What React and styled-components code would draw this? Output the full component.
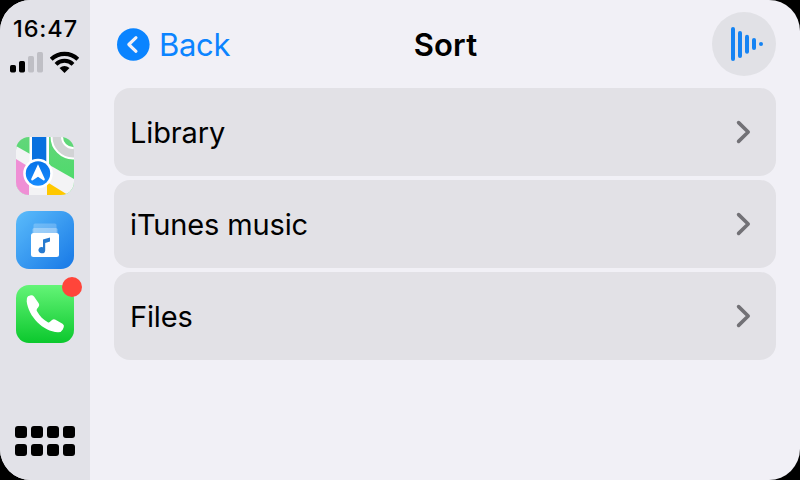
import React from "react";
import styled, { createGlobalStyle } from "styled-components";

const GlobalStyle = createGlobalStyle`
  * { box-sizing: border-box; }
  body { margin: 0; background: #000; font-family: Inter, "Liberation Sans", sans-serif; color: #000; }
  svg { display: block; }
`;

const Screen = styled.div`
  display: flex;
  width: 800px;
  height: 480px;
  border-radius: 31px;
  overflow: hidden;
  background: #f1f0f6;
`;

const Sidebar = styled.aside`
  display: flex;
  flex-direction: column;
  align-items: center;
  width: 90px;
  height: 100%;
  padding: 16px 0 24px;
  background: #e2e2e8;
`;

const Clock = styled.time`
  font-size: 23.5px;
  line-height: 26px;
  font-weight: 500;
  letter-spacing: 0.9px;
  padding-left: 1px;
`;

const Status = styled.div`
  display: flex;
  align-items: flex-end;
  gap: 7px;
  height: 22px;
  margin-top: 9px;
`;

const Apps = styled.nav`
  display: flex;
  flex-direction: column;
  gap: 16px;
  margin-top: 64px;
`;

const AppTile = styled.div`
  position: relative;
  width: 58px;
  height: 58px;
`;

const Badge = styled.span`
  position: absolute;
  top: -8px;
  right: -8px;
  width: 20px;
  height: 20px;
  border-radius: 50%;
  background: #ff453a;
`;

const AppGrid = styled.div`
  display: grid;
  grid-template-columns: repeat(4, 12px);
  gap: 6px 4px;
  margin-top: auto;
`;

const GridDot = styled.i`
  height: 12px;
  border-radius: 3px;
  background: #000;
`;

const Main = styled.main`
  flex: 1;
  padding: 12px 24px 0;
`;

const Header = styled.header`
  display: grid;
  grid-template-columns: 1fr auto 1fr;
  align-items: center;
  height: 64px;
  margin-bottom: 12px;
`;

const Back = styled.div`
  display: flex;
  align-items: center;
  gap: 9px;
  padding-left: 3px;
  color: #0b84ff;
  font-size: 31px;
  line-height: 38px;
  letter-spacing: -0.3px;
`;

const BackLabel = styled.span`
  padding-top: 2px;
`;

const Title = styled.h1`
  margin: 0;
  padding: 2px 0 0 1px;
  font-size: 31px;
  line-height: 38px;
  font-weight: 600;
  letter-spacing: 0.2px;
`;

const NowPlaying = styled.div`
  display: grid;
  place-items: center;
  justify-self: end;
  width: 64px;
  height: 64px;
  border-radius: 50%;
  background: #e1e1e6;
`;

const List = styled.div`
  display: flex;
  flex-direction: column;
  gap: 4px;
`;

const Row = styled.div`
  display: flex;
  align-items: center;
  justify-content: space-between;
  height: 88px;
  padding: 0 24px 0 16px;
  border-radius: 16px;
  background: #e2e1e6;
`;

const RowLabel = styled.span`
  padding-top: 2px;
  font-size: 29px;
  line-height: 38px;
  letter-spacing: -0.14px;
`;

const rows = ["Library", "iTunes music", "Files"];

const SignalIcon = () => (
  <svg width="33" height="22" viewBox="0 0 33 22">
    <rect x="0" y="14" width="6" height="7.5" rx="1.7" />
    <rect x="9" y="10" width="6" height="11.5" rx="1.7" />
    <rect x="18" y="5" width="6" height="16.5" rx="1.7" fill="#bfbfc5" />
    <rect x="27" y="1" width="6" height="20.5" rx="1.7" fill="#bfbfc5" />
  </svg>
);

const WifiIcon = () => (
  <svg width="30" height="22" viewBox="0 0 30 22">
    <path d="M1.2 8.2A19.3 19.3 0 0 1 27.8 8.2" fill="none" stroke="#000" strokeWidth="4.1" />
    <path d="M6 13.3A12 12 0 0 1 23 13.3" fill="none" stroke="#000" strokeWidth="4" />
    <path d="M9.5 16.9Q14.5 13.1 19.5 16.9L14.5 21.9Z" />
  </svg>
);

const MapsIcon = () => (
  <svg width="58" height="58" viewBox="0 0 58 58">
    <defs>
      <clipPath id="map-shape"><rect width="58" height="58" rx="13" /></clipPath>
      <linearGradient id="map-blue" x1="0" y1="0" x2="0" y2="1">
        <stop offset="0" stopColor="#0873e8" /><stop offset="1" stopColor="#168cff" />
      </linearGradient>
      <linearGradient id="map-green" x1="0" y1="0" x2="0" y2="1">
        <stop offset="0" stopColor="#62d67a" /><stop offset="1" stopColor="#48dc66" />
      </linearGradient>
    </defs>
    <g clipPath="url(#map-shape)">
      <rect width="58" height="58" fill="url(#map-green)" />
      <path d="M0 9L58 42V58H0Z" fill="#f3f3f5" />
      <path d="M0 22L13 30V58H0Z" fill="#ef8fd5" />
      <path d="M31 45L52 58H31Z" fill="#ffc800" />
      <circle cx="57" cy="0" r="16.2" fill="none" stroke="#fff" strokeWidth="12.5" />
      <circle cx="57" cy="0" r="16.2" fill="none" stroke="#d2d3d5" strokeWidth="8.5" />
      <path d="M13.5 0H33V36H13.5Z" fill="#fff" />
      <path d="M16 0H30.3V35H16Z" fill="#0870df" />
    </g>
    <circle cx="22" cy="36.5" r="14.8" fill="#fff" />
    <circle cx="22" cy="36.5" r="12.2" fill="url(#map-blue)" />
    <path d="M22 27.2L28.8 42.1Q29 44 27.2 43.2L22 39.8L16.8 43.2Q15 44 15.2 42.1Z" fill="#fff" />
  </svg>
);

const MusicIcon = () => (
  <svg width="58" height="58" viewBox="0 0 58 58">
    <defs>
      <linearGradient id="music-bg" x1="0" y1="0" x2="1" y2="1">
        <stop offset="0" stopColor="#5bbcfb" /><stop offset="1" stopColor="#1778e6" />
      </linearGradient>
    </defs>
    <rect width="58" height="58" rx="13" fill="url(#music-bg)" />
    <rect x="17.5" y="12.5" width="23" height="10" rx="1.5" fill="#fff" opacity=".22" />
    <rect x="16.5" y="17" width="25" height="6" rx="1.5" fill="#fff" opacity=".32" />
    <rect x="15" y="22" width="28" height="24" rx="2.5" fill="#fff" />
    <path d="M27 28.5L34 26.4V30.4L29.2 31.9V39.4A3.4 3.1 0 1 1 27 36.2Z" fill="#277bd0" />
  </svg>
);

const PhoneIcon = () => (
  <svg width="58" height="58" viewBox="0 0 58 58">
    <defs>
      <linearGradient id="phone-bg" x1="0" y1="0" x2="0" y2="1">
        <stop offset="0" stopColor="#64f477" /><stop offset="1" stopColor="#0bc82d" />
      </linearGradient>
    </defs>
    <rect width="58" height="58" rx="13" fill="url(#phone-bg)" />
    <path
      d="M12 11.2L14.9 10.2Q16.7 9.8 18 11.6L22.7 18.3Q23.9 20 22.6 21.7L20.9 23.9Q20.3 25 21 26.3C24 31.5 27 34.5 31.8 37.2Q33 37.8 34 36.8L36 35.1Q37.7 33.8 39.5 34.8L46.5 38.8Q48.5 40 47.8 42L46.8 44.5Q45.5 47.3 42 47.2C27 46.5 12.5 31.5 10.7 16.5Q10.2 12.7 12 11.2Z"
      fill="#fff"
    />
  </svg>
);

const BackIcon = () => (
  <svg width="33" height="33" viewBox="0 0 33 33">
    <circle cx="16.3" cy="16.5" r="16.3" fill="#0a84ff" />
    <path d="M19 9.7L11.8 16.5L19 23.3" fill="none" stroke="#f1f0f6" strokeWidth="3.1" strokeLinecap="round" strokeLinejoin="round" />
  </svg>
);

const WaveIcon = () => (
  <svg width="64" height="64" viewBox="0 0 64 64">
    <g fill="#1583f3">
      <rect x="19" y="15" width="4" height="34" rx="2" />
      <rect x="26" y="19" width="4" height="27" rx="2" />
      <rect x="33" y="22.7" width="4" height="19" rx="2" />
      <rect x="40" y="26" width="4" height="12" rx="2" />
      <circle cx="49" cy="32" r="2" />
    </g>
  </svg>
);

const Chevron = () => (
  <svg width="16" height="24" viewBox="0 0 16 24">
    <path d="M2.6 2.6L12.2 12L2.6 21.4" fill="none" stroke="#727176" strokeWidth="3.6" strokeLinecap="round" strokeLinejoin="round" />
  </svg>
);

export default function App() {
  return (
    <>
      <GlobalStyle />
      <Screen>
        <Sidebar>
          <Clock>16:47</Clock>
          <Status><SignalIcon /><WifiIcon /></Status>
          <Apps>
            <AppTile><MapsIcon /></AppTile>
            <AppTile><MusicIcon /></AppTile>
            <AppTile><PhoneIcon /><Badge /></AppTile>
          </Apps>
          <AppGrid>
            {Array.from({ length: 8 }, (_, i) => <GridDot key={i} />)}
          </AppGrid>
        </Sidebar>
        <Main>
          <Header>
            <Back><BackIcon /><BackLabel>Back</BackLabel></Back>
            <Title>Sort</Title>
            <NowPlaying><WaveIcon /></NowPlaying>
          </Header>
          <List>
            {rows.map((label) => (
              <Row key={label}>
                <RowLabel>{label}</RowLabel>
                <Chevron />
              </Row>
            ))}
          </List>
        </Main>
      </Screen>
    </>
  );
}
